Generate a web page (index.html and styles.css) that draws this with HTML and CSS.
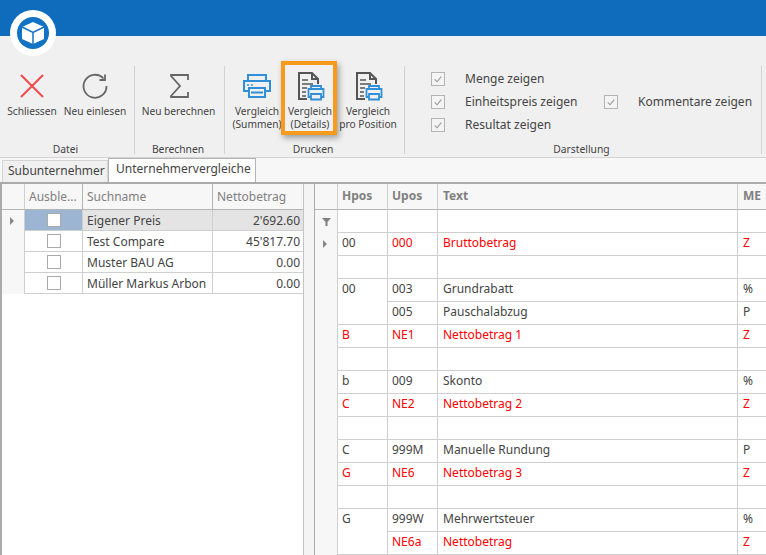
FILE: index.html
```html
<!DOCTYPE html>
<html lang="de">
<head>
<meta charset="utf-8">
<title>Unternehmervergleiche</title>
<link rel="stylesheet" href="styles.css">
</head>
<body>
<header class="titlebar"></header>
<div class="logo">
  <svg viewBox="0 0 46 46" width="46" height="46">
    <circle cx="23" cy="23" r="23" fill="#fff"/>
    <circle cx="23" cy="23" r="16" fill="#1272c4"/>
    <path d="M23 12 34 17 34 29 23 34 12 29 12 17Z" fill="#fff"/>
    <path d="M23 22.500V34M12 17 23 22.500 34 17" fill="none" stroke="#1272c4" stroke-width="1.500"/>
  </svg>
</div>
<section class="ribbon">
  <div class="group g-datei">
    <div class="buttons">
      <div class="btn b-close">
        <svg class="ico" viewBox="0 0 32 32"><path d="M5 4 27 26M27 4 5 26" stroke="#ef4b4b" stroke-width="2" fill="none"/></svg>
        <span>Schliessen</span>
      </div>
      <div class="btn b-reload">
        <svg class="ico" viewBox="0 0 32 32"><path d="M24.500 7.500A11.500 11.500 0 1 0 27.500 15" stroke="#666" stroke-width="1.800" fill="none"/><path d="M20.500 9H26V3.500" stroke="#666" stroke-width="1.800" fill="none"/></svg>
        <span>Neu einlesen</span>
      </div>
    </div>
    <div class="glabel">Datei</div>
  </div>
  <div class="group g-calc">
    <div class="buttons">
      <div class="btn b-calc">
        <svg class="ico" viewBox="0 0 32 32"><path d="M25 9V4H8V5L17 15 8 25V26H25V21" stroke="#666" stroke-width="1.800" fill="none"/></svg>
        <span>Neu berechnen</span>
      </div>
    </div>
    <div class="glabel">Berechnen</div>
  </div>
  <div class="group g-print">
    <div class="buttons">
      <div class="btn b-p1">
        <svg class="ico" viewBox="0 0 32 32" fill="none" stroke="#2f8fd8" stroke-width="2"><path d="M7 10V4H25V10"/><path d="M8 20H3V10H29V20H24"/><path d="M8 17H24V26H8Z"/><path d="M10 21.500H22" stroke-width="2"/><path d="M6 14H8M10 14H12" stroke-width="1.500"/></svg>
        <span>Vergleich<br>(Summen)</span>
      </div>
      <div class="btn b-p2">
        <svg class="ico" viewBox="0 0 32 32" fill="none"><path d="M13 28H5V2H18L24 8V13M18 2V8H24" stroke="#555" stroke-width="2"/><path d="M8 9H14M8 13H19M8 17H13M8 21H12M8 25H12" stroke="#555" stroke-width="1.500"/><path d="M17 18V15H27V18M17 26H14.500V18H29.500V26H27M17 23H27V28.500H17Z" stroke="#2f8fd8" stroke-width="1.800"/></svg>
        <span>Vergleich<br>(Details)</span>
      </div>
      <div class="btn b-p3">
        <svg class="ico" viewBox="0 0 32 32" fill="none"><path d="M13 28H5V2H18L24 8V13M18 2V8H24" stroke="#555" stroke-width="2"/><path d="M8 9H14M8 13H19M8 17H13M8 21H12M8 25H12" stroke="#555" stroke-width="1.500"/><path d="M17 18V15H27V18M17 26H14.500V18H29.500V26H27M17 23H27V28.500H17Z" stroke="#2f8fd8" stroke-width="1.800"/></svg>
        <span>Vergleich<br>pro Position</span>
      </div>
    </div>
    <div class="glabel">Drucken</div>
  </div>
  <div class="group g-view">
    <div class="options">
      <span class="cb"><svg viewBox="0 0 13 13"><path d="M3 7 5.500 9.500 10 4" stroke="#999" stroke-width="1.200" fill="none"/></svg></span><span class="optlabel">Menge zeigen</span><i></i><i></i>
      <span class="cb"><svg viewBox="0 0 13 13"><path d="M3 7 5.500 9.500 10 4" stroke="#999" stroke-width="1.200" fill="none"/></svg></span><span class="optlabel">Einheitspreis zeigen</span>
      <span class="cb"><svg viewBox="0 0 13 13"><path d="M3 7 5.500 9.500 10 4" stroke="#999" stroke-width="1.200" fill="none"/></svg></span><span class="optlabel">Kommentare zeigen</span>
      <span class="cb"><svg viewBox="0 0 13 13"><path d="M3 7 5.500 9.500 10 4" stroke="#999" stroke-width="1.200" fill="none"/></svg></span><span class="optlabel">Resultat zeigen</span><i></i><i></i>
    </div>
    <div class="glabel">Darstellung</div>
  </div>
</section>
<div class="highlight"></div>
<nav class="tabs">
  <div class="tab">Subunternehmer</div>
  <div class="tab active">Unternehmervergleiche</div>
</nav>
<main class="content">
  <section class="left">
    <div class="lrow lhead">
      <div class="c ind"></div><div class="c hd">Ausble...</div><div class="c hd">Suchname</div><div class="c hd">Nettobetrag</div>
    </div>
    <div class="lrow sel">
      <div class="c ind"><span class="arrow"></span></div><div class="c chk focus"><span class="box"></span></div><div class="c">Eigener Preis</div><div class="c num">2'692.60</div>
    </div>
    <div class="lrow">
      <div class="c ind"></div><div class="c chk"><span class="box"></span></div><div class="c">Test Compare</div><div class="c num">45'817.70</div>
    </div>
    <div class="lrow">
      <div class="c ind"></div><div class="c chk"><span class="box"></span></div><div class="c">Muster BAU AG</div><div class="c num">0.00</div>
    </div>
    <div class="lrow">
      <div class="c ind"></div><div class="c chk"><span class="box"></span></div><div class="c">Müller Markus Arbon</div><div class="c num">0.00</div>
    </div>
  </section>
  <div class="splitter"></div>
  <section class="right">
    <div class="rrow rhead"><div class="c ind"></div><div class="c">Hpos</div><div class="c">Upos</div><div class="c">Text</div><div class="c">ME</div></div>
    <div class="rrow"><div class="c ind"><svg class="filter" viewBox="0 0 9 9"><path d="M0 1H9L5.500 5V9H3.500V5Z" fill="#808080"/></svg></div><div class="c"></div><div class="c"></div><div class="c"></div><div class="c"></div></div>
    <div class="rrow"><div class="c ind"><span class="arrow"></span></div><div class="c">00</div><div class="c red">000</div><div class="c red">Bruttobetrag</div><div class="c red">Z</div></div>
    <div class="rrow"><div class="c ind"></div><div class="c"></div><div class="c"></div><div class="c"></div><div class="c"></div></div>
    <div class="rrow merged"><div class="c ind"></div><div class="c">00</div><div class="c">003</div><div class="c">Grundrabatt</div><div class="c">%</div></div>
    <div class="rrow"><div class="c ind"></div><div class="c"></div><div class="c">005</div><div class="c">Pauschalabzug</div><div class="c">P</div></div>
    <div class="rrow"><div class="c ind"></div><div class="c red">B</div><div class="c red">NE1</div><div class="c red">Nettobetrag 1</div><div class="c red">Z</div></div>
    <div class="rrow"><div class="c ind"></div><div class="c"></div><div class="c"></div><div class="c"></div><div class="c"></div></div>
    <div class="rrow"><div class="c ind"></div><div class="c">b</div><div class="c">009</div><div class="c">Skonto</div><div class="c">%</div></div>
    <div class="rrow"><div class="c ind"></div><div class="c red">C</div><div class="c red">NE2</div><div class="c red">Nettobetrag 2</div><div class="c red">Z</div></div>
    <div class="rrow"><div class="c ind"></div><div class="c"></div><div class="c"></div><div class="c"></div><div class="c"></div></div>
    <div class="rrow"><div class="c ind"></div><div class="c">C</div><div class="c">999M</div><div class="c">Manuelle Rundung</div><div class="c">P</div></div>
    <div class="rrow"><div class="c ind"></div><div class="c red">G</div><div class="c red">NE6</div><div class="c red">Nettobetrag 3</div><div class="c red">Z</div></div>
    <div class="rrow"><div class="c ind"></div><div class="c"></div><div class="c"></div><div class="c"></div><div class="c"></div></div>
    <div class="rrow merged"><div class="c ind"></div><div class="c">G</div><div class="c">999W</div><div class="c">Mehrwertsteuer</div><div class="c">%</div></div>
    <div class="rrow"><div class="c ind"></div><div class="c"></div><div class="c red">NE6a</div><div class="c red">Nettobetrag</div><div class="c red">Z</div></div>
  </section>
</main>
</body>
</html>
```
FILE: styles.css
```css
* { box-sizing: border-box; }
html, body { margin: 0; height: 100%; overflow: hidden; }
body {
  width: 766px; height: 555px; position: relative;
  background: #f7f7f7; color: #444;
  font: 12px/14px "Noto Sans", sans-serif;
}
.titlebar { height: 36px; background: #0f6cbd; }
.logo { position: absolute; left: 10px; top: 10px; width: 46px; height: 46px; }
.logo svg { display: block; }

.ribbon {
  display: flex; height: 122px; background: #f0f0f0;
  border-bottom: 1px solid #d4d4d4; padding-top: 30px;
}
.group { display: flex; flex-direction: column; border-right: 1px solid #d2d2d2; height: 88px; position: relative; }
.g-datei { width: 135px; }
.g-calc { width: 90px; }
.g-print { width: 180px; }
.g-view { width: 357px; }
.buttons { display: flex; height: 76px; }
.glabel { text-align: center; height: 12px; line-height: 14px; white-space: nowrap; font-size: 10.300px; padding-right: 3px; }
.btn { display: flex; flex-direction: column; align-items: center; padding-top: 5px; text-align: center; white-space: nowrap; font-size: 10.200px; line-height: 13px; }
.btn span { margin-top: 2px; }
.ico { width: 32px; height: 32px; display: block; }
.b-close { width: 64px; }
.b-reload { width: 62px; }
.b-calc { width: 87px; }
.b-p1 { width: 58px; margin-left: 3px; }
.b-p2 { width: 48px; }
.b-p3 { width: 68px; }

.options {
  display: grid; grid-template-columns: 14px 119px 14px auto;
  grid-auto-rows: 23px; column-gap: 20px; height: 76px;
  padding: 1px 0 0 26px; align-items: center;
}
.options i { display: block; }
.cb { width: 14px; height: 14px; border: 1px solid #b4b4b4; background: #f4f4f4; display: block; }
.cb svg { display: block; width: 12px; height: 12px; }
.optlabel { white-space: nowrap; }

.highlight {
  position: absolute; left: 281px; top: 61px; width: 56px; height: 74px;
  border: 4px solid #f89b1c; box-shadow: 2px 3px 6px rgba(0,0,0,.35);
}

.tabs { display: flex; height: 24px; align-items: flex-end; padding-left: 2px; }
.tab { height: 22px; padding: 3px 5px 0; background: #f0f0f0; border: 1px solid #d4d4d4; border-bottom: 0; width: 106px; white-space: nowrap; }
.tab.active { height: 24px; width: 148px; padding: 3px 0 0 7px; background: #fff; border: 1px solid #b4b4b4; border-bottom: 0; }

.content { display: flex; height: 373px; background: #fff; border-top: 2px solid #ababab; }
.left { width: 303px; border-left: 2px solid #ababab; background: #fff; }
.splitter { width: 12px; background: #f4f4f4; border-left: 1px solid #c4c4c4; border-right: 1px solid #ababab; }
.right { flex: 1; min-width: 0; background: #fff; overflow: hidden; }

.c { overflow: hidden; white-space: nowrap; border-right: 1px solid #cfcfcf; border-bottom: 1px solid #cfcfcf; padding: 0 4px; }

.lrow { display: grid; grid-template-columns: 23px 58px 130px 90px; height: 21px; line-height: 21px; }
.lrow .ind { border-right: 1px solid #cfcfcf; border-bottom: 0; background: #f7f7f7; padding: 0; position: relative; }
.lrow .c:last-child { border-right: 0; }
.lhead { height: 26px; line-height: 25px; background: #f7f7f7; color: #808080; }
.lhead .c { border-bottom: 1px solid #b4b4b4; background: #f7f7f7; }
.lhead .ind { border-bottom: 1px solid #b4b4b4; }
.lhead .hd { border-right: 1px solid #b4b4b4; }
.sel .c { background: #e4e4e4; }
.sel .ind { background: #f7f7f7; }
.sel .focus { background: #9bb5d3; }
.chk { display: flex; align-items: center; justify-content: center; padding: 0; }
.box { display: block; width: 14px; height: 14px; border: 1px solid #aaa; background: #fff; }
.num { text-align: right; padding-right: 3px; }
.arrow { position: absolute; left: 8px; top: 7px; width: 0; height: 0; border-left: 4px solid #888; border-top: 4px solid transparent; border-bottom: 4px solid transparent; }

.rrow { display: grid; grid-template-columns: 23px 50px 50px 300px 40px; height: 23px; line-height: 20px; width: 451px; }
.rrow .ind { position: relative; padding: 0; background: #f7f7f7; border-bottom: 0; }
.rrow .c:nth-child(n+4) { padding-left: 5px; }
.rrow .c:last-child { border-right: 0; }
.rhead { height: 26px; line-height: 24px; background: #f7f7f7; font-weight: 700; color: #808080; }
.rhead .c { background: #f7f7f7; border-bottom: 1px solid #b4b4b4; }
.rhead .ind { border-bottom: 1px solid #b4b4b4; }
.merged .c:nth-child(2) { border-bottom: 0; }
.red { color: #f00; }
.filter { position: absolute; left: 7px; top: 7px; width: 9px; height: 9px; }
```
